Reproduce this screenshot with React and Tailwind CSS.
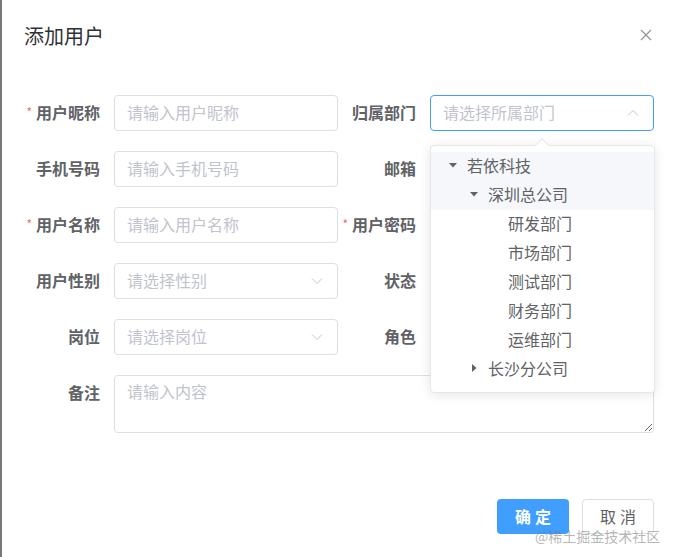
import React from 'react'

const font = { fontFamily: '"Noto Sans CJK SC", "Noto Sans", sans-serif' }

function Chevron({ up }) {
  return (
    <svg width="14" height="14" viewBox="0 0 14 14" className="text-[#c0c4cc]">
      <path d={up ? 'M2 9.5 L7 4.5 L12 9.5' : 'M2 4.5 L7 9.5 L12 4.5'} fill="none" stroke="currentColor" strokeWidth="1" />
    </svg>
  )
}

function Label({ text, required }) {
  return (
    <div className="w-[80px] pr-[14px] pb-[3px] flex justify-end items-center h-[36px] text-[16px] font-bold text-[#606266] shrink-0 whitespace-nowrap">
      {required && <span className="text-[#f56c6c] mr-[4px] text-[12px] font-normal">*</span>}
      {text}
    </div>
  )
}

function Input({ placeholder, select, focus, up }) {
  return (
    <div
      className={
        'w-[224px] h-[36px] rounded-[4px] border flex items-center justify-between pl-[12px] pr-[13px] text-[16px] text-[#c0c4cc] bg-white ' +
        (focus ? 'border-[#409eff]' : 'border-[#dcdfe6]')
      }
    >
      <span className="pb-[3px]">{placeholder}</span>
      {select && <Chevron up={up} />}
    </div>
  )
}

function Field({ label, required, placeholder, select, focus, up }) {
  return (
    <div className="flex">
      <Label text={label} required={required} />
      {placeholder ? <Input placeholder={placeholder} select={select} focus={focus} up={up} /> : <div className="w-[224px]" />}
    </div>
  )
}

const tree = [
  { t: '若依科技', lv: 0, caret: 'down', hl: true },
  { t: '深圳总公司', lv: 1, caret: 'down', hl: true },
  { t: '研发部门', lv: 2 },
  { t: '市场部门', lv: 2 },
  { t: '测试部门', lv: 2 },
  { t: '财务部门', lv: 2 },
  { t: '运维部门', lv: 2 },
  { t: '长沙分公司', lv: 1, caret: 'right' },
]

function Caret({ dir }) {
  if (!dir) return <span className="w-[12px] shrink-0" />
  return (
    <svg width="12" height="12" viewBox="0 0 12 12" className="shrink-0 text-[#606266]">
      {dir === 'down' ? <path d="M2 4 L10 4 L6 8.5 Z" fill="currentColor" /> : <path d="M4 2 L8.5 6 L4 10 Z" fill="currentColor" />}
    </svg>
  )
}

function TreeDropdown() {
  return (
    <div className="absolute left-[428px] top-[145px] w-[225px] h-[248px] bg-white border border-[#e4e7ed] rounded-[4px] shadow-[0_2px_12px_rgba(0,0,0,0.1)] pt-[6px]">
      <div className="absolute left-[106px] top-[-6px] w-[10px] h-[10px] bg-white border-l border-t border-[#e4e7ed] rotate-45" />
      {tree.map((n, i) => (
        <div
          key={i}
          className={'h-[29px] flex items-center text-[16px] text-[#606266] pb-[4px] ' + (n.hl ? 'bg-[#f5f7fa]' : '')}
          style={{ paddingLeft: 16 + (n.lv === 0 ? 0 : n.lv === 1 ? 21 : 41) }}
        >
          <Caret dir={n.caret} />
          <span className="ml-[8px]">{n.t}</span>
        </div>
      ))}
    </div>
  )
}

export default function App() {
  return (
    <div className="w-[677px] h-[557px] bg-white border-l-2 border-[#777] relative overflow-hidden" style={font}>
      <div className="flex items-center justify-between pl-[22px] pr-[24px] pt-[22px] h-[50px]">
        <div className="text-[20px] text-[#303133] leading-[26px]">添加用户</div>
        <svg width="14" height="14" viewBox="0 0 14 14" className="text-[#909399] mt-[-2px]">
          <path d="M2 2 L12 12 M12 2 L2 12" stroke="currentColor" strokeWidth="1.2" />
        </svg>
      </div>

      <div className="pl-[32px] pt-[45px] flex flex-col gap-[20px]">
        <div className="flex gap-[12px]">
          <Field label="用户昵称" required placeholder="请输入用户昵称" />
          <Field label="归属部门" placeholder="请选择所属部门" select focus up />
        </div>
        <div className="flex gap-[12px]">
          <Field label="手机号码" placeholder="请输入手机号码" />
          <Field label="邮箱" />
        </div>
        <div className="flex gap-[12px]">
          <Field label="用户名称" required placeholder="请输入用户名称" />
          <Field label="用户密码" required />
        </div>
        <div className="flex gap-[12px]">
          <Field label="用户性别" placeholder="请选择性别" select />
          <Field label="状态" />
        </div>
        <div className="flex gap-[12px]">
          <Field label="岗位" placeholder="请选择岗位" select />
          <Field label="角色" />
        </div>
        <div className="flex">
          <Label text="备注" />
          <textarea
            className="w-[540px] h-[58px] border border-[#dcdfe6] rounded-[4px] px-[12px] py-[3px] text-[16px] text-[#606266] placeholder:text-[#c0c4cc] outline-none resize-y"
            placeholder="请输入内容"
          />
        </div>
      </div>

      <div className="flex justify-end gap-[13px] pr-[23px] mt-[66px]">
        <button className="w-[72px] h-[35px] rounded-[4px] bg-[#409eff] text-white text-[16px] font-bold tracking-[4px] pl-[4px] pb-[2px]">确定</button>
        <button className="w-[72px] h-[35px] rounded-[4px] border border-[#dcdfe6] bg-white text-[#606266] text-[16px] tracking-[4px] pl-[4px] pb-[2px]">取消</button>
      </div>

      <TreeDropdown />

      <div className="absolute left-[533px] top-[526px] text-[14px] text-[rgba(120,120,120,0.55)] whitespace-nowrap">@稀土掘金技术社区</div>
    </div>
  )
}
